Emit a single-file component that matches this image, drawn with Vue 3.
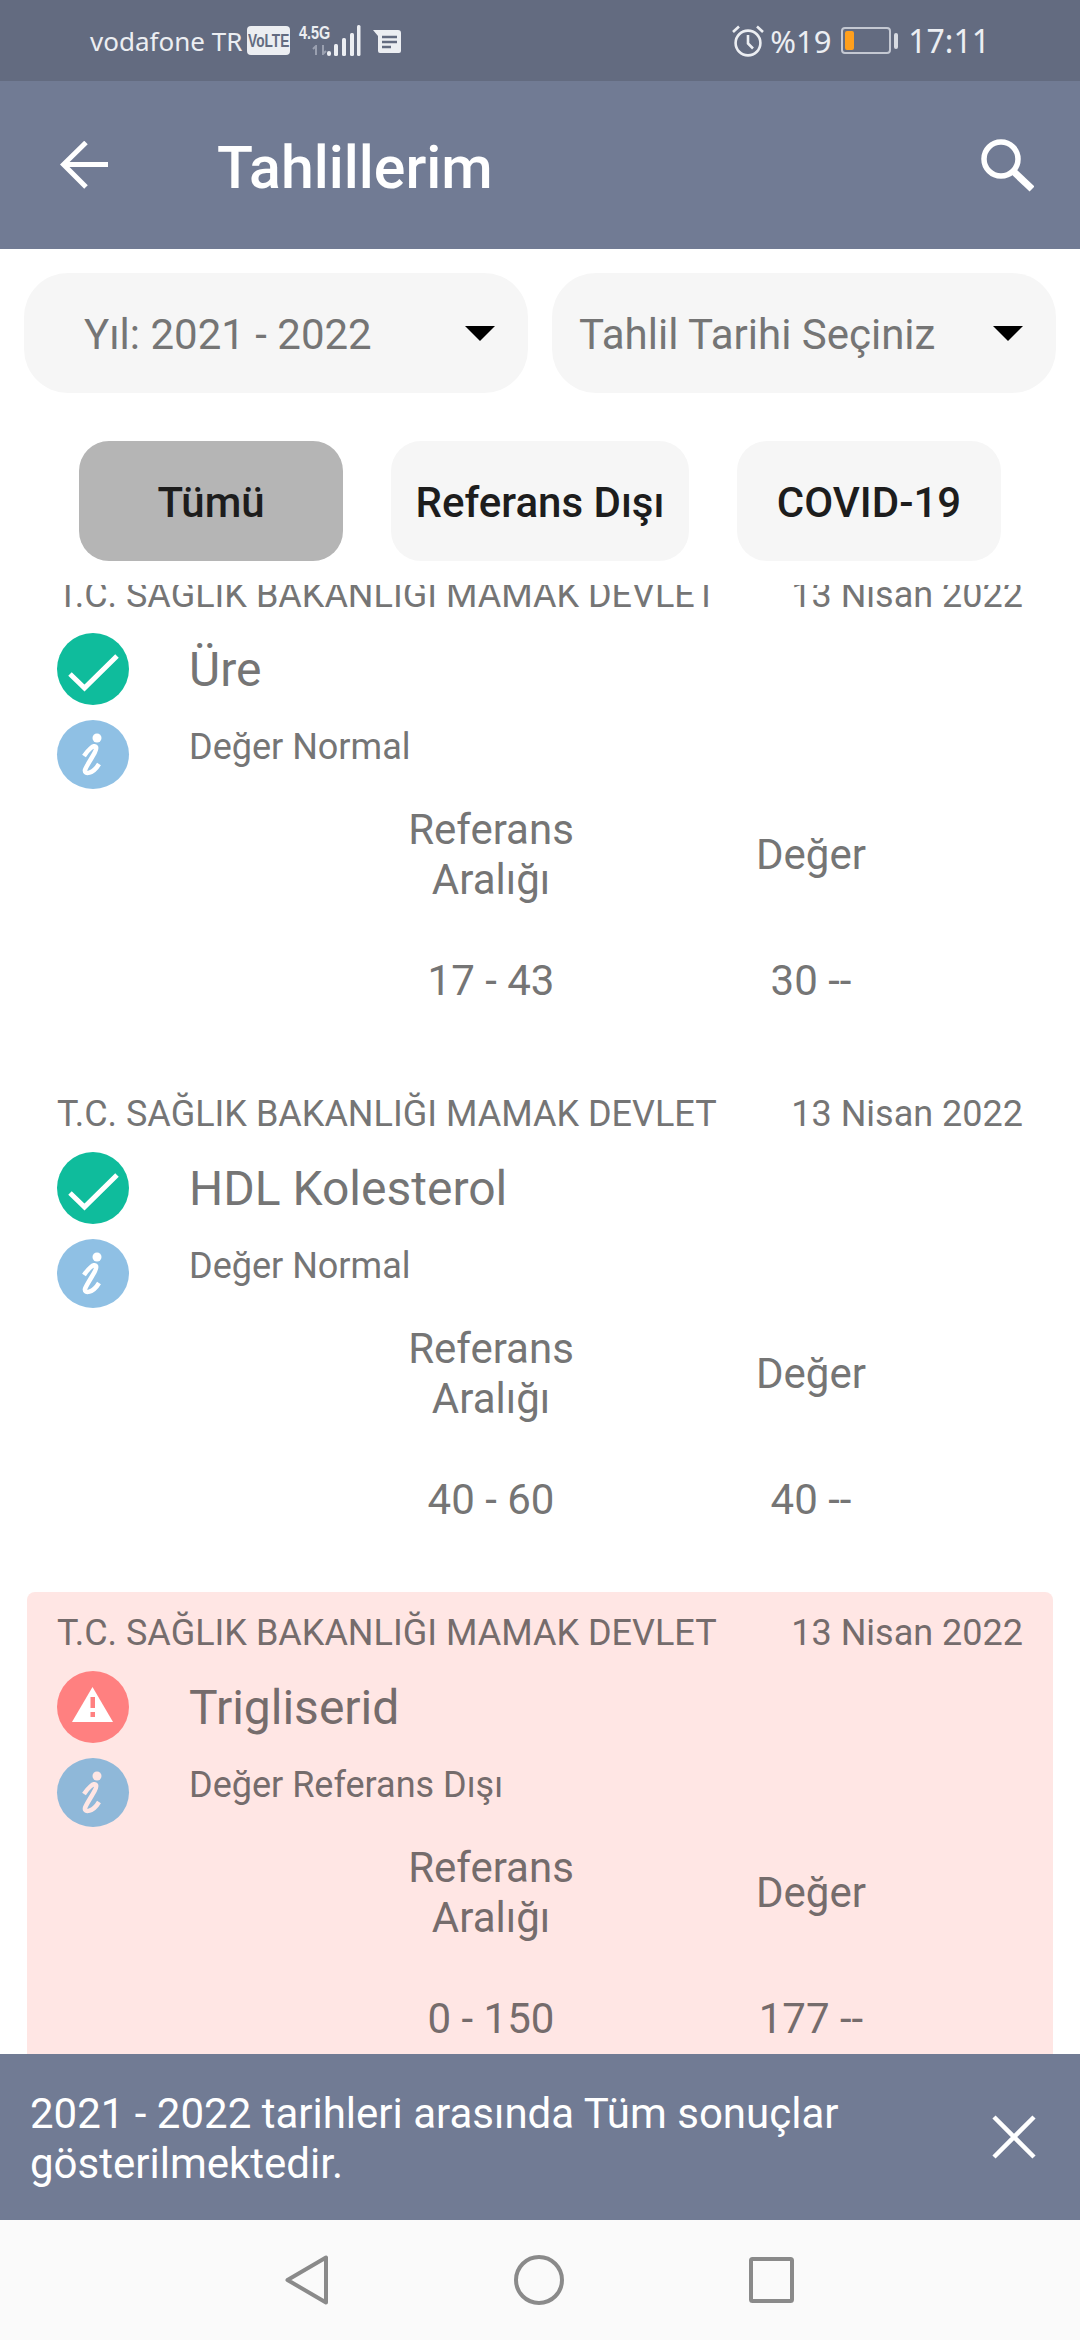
<template>
  <div class="screen">
    <div class="status-bar">
      <span class="carrier">vodafone TR</span>
      <span class="volte"><span class="volte-text">VoLTE</span></span>
      <span class="net">
        <span class="net-label">4.5G</span>
        <svg class="net-arrows" width="16" height="10" viewBox="0 0 16 10">
          <path d="M4 10V1L1 4M11 0v9l3-3" fill="none" stroke="#9aa0b0" stroke-width="2" />
        </svg>
      </span>
      <svg class="signal" width="34" height="31" viewBox="0 0 34 31">
        <rect x="0" y="26" width="4" height="5" rx="2" fill="#eceef2" />
        <rect x="7" y="19" width="4" height="12" rx="1.500" fill="#eceef2" />
        <rect x="15" y="13" width="4" height="18" rx="1.500" fill="#eceef2" />
        <rect x="23" y="8" width="4" height="23" rx="1.500" fill="#eceef2" />
        <rect x="30" y="0" width="3.500" height="31" rx="1.500" fill="#eceef2" />
      </svg>
      <svg class="notif" width="28" height="23" viewBox="0 0 28 23">
        <path d="M0 0h25a3 3 0 0 1 3 3v18a2 2 0 0 1-2 2H7a2 2 0 0 1-2-2V6z" fill="#eceef2" />
        <path d="M9 7h15M9 12h15M9 17h9" stroke="#636b80" stroke-width="2.600" />
      </svg>
      <span class="spacer"></span>
      <svg class="alarm" width="32" height="32" viewBox="0 0 32 32" fill="none" stroke="#eceef2" stroke-width="2.600">
        <circle cx="16" cy="18" r="12.400" />
        <path d="M16 10v8.500l5 5M1 7l6-5.500M31 7l-6-5.500" />
      </svg>
      <span class="percent">%19</span>
      <div class="battery"><div class="battery-fill"></div></div>
      <div class="battery-nub"></div>
      <span class="clock">17:11</span>
    </div>

    <header class="app-bar">
      <svg class="back" width="48" height="48" viewBox="0 0 48 48" fill="none" stroke="#fff" stroke-width="5">
        <path d="M48 23.500H4M26 1.500L3.500 23.500 26 46" />
      </svg>
      <h1 class="title">Tahlillerim</h1>
      <svg class="search" width="54" height="54" viewBox="0 0 54 54" fill="none" stroke="#fff" stroke-width="5.500">
        <circle cx="21" cy="21" r="17" />
        <path d="M33 33l19 18" stroke-width="7" />
      </svg>
    </header>

    <div class="filters">
      <div class="select first">
        <span>Yıl: 2021 - 2022</span>
        <i class="caret"></i>
      </div>
      <div class="select second">
        <span>Tahlil Tarihi Seçiniz</span>
        <i class="caret"></i>
      </div>
    </div>

    <div class="tabs">
      <button v-for="tab in tabs" :key="tab.label" class="tab" :class="[tab.cls, { active: tab.active }]">{{ tab.label }}</button>
    </div>

    <div class="results">
      <div class="results-inner">
        <div v-for="item in results" :key="item.name" class="result" :class="{ bad: item.bad }">
          <div class="result-head">
            <span>T.C. SAĞLIK BAKANLIĞI MAMAK DEVLET</span>
            <span>13 Nisan 2022</span>
          </div>
          <div class="result-row name-row">
            <span class="badge" :class="item.bad ? 'badge-bad' : 'badge-ok'">
              <svg v-if="!item.bad" width="72" height="72" viewBox="0 0 72 72" fill="none" stroke="#fff" stroke-width="5">
                <path d="M13 41l14.500 14L60 23" />
              </svg>
              <svg v-else width="72" height="72" viewBox="0 0 72 72">
                <path d="M35.500 16L56 51H15z" fill="#fff" />
                <rect x="33.500" y="26" width="4.500" height="11" fill="#ff8080" />
                <rect x="33.500" y="41" width="4.500" height="5" fill="#ff8080" />
              </svg>
            </span>
            <span class="name">{{ item.name }}</span>
          </div>
          <div class="result-row note-row">
            <span class="badge badge-info">
              <svg width="72" height="69" viewBox="0 0 72 69">
                <circle cx="40" cy="18" r="4.500" fill="currentColor" />
                <path d="M27 36C31 30 37 24 39 27 41 30 30 44 28 50 27 55 36 54 42 44" fill="none" stroke="currentColor" stroke-width="4.500" />
              </svg>
            </span>
            <span class="note">{{ item.note }}</span>
          </div>
          <div class="values">
            <div class="cell cell-ref">Referans<br />Aralığı</div>
            <div class="cell cell-head">Değer</div>
            <div class="cell cell-val">{{ item.range }}</div>
            <div class="cell cell-val">{{ item.value }}</div>
          </div>
        </div>
      </div>
    </div>

    <div class="snackbar">
      <p>2021 - 2022 tarihleri arasında Tüm sonuçlar gösterilmektedir.</p>
      <svg width="44" height="44" viewBox="0 0 44 44" stroke="#fff" stroke-width="4.500">
        <path d="M2 2l40 40M42 2L2 42" />
      </svg>
    </div>

    <nav class="nav-bar">
      <svg width="44" height="50" viewBox="0 0 44 50" fill="none" stroke="#8a8a8a" stroke-width="4" stroke-linejoin="round">
        <path d="M41 2.500V47.500L2.500 25z" />
      </svg>
      <svg width="50" height="50" viewBox="0 0 50 50" fill="none" stroke="#8a8a8a" stroke-width="4">
        <circle cx="25" cy="25" r="23" />
      </svg>
      <svg width="46" height="46" viewBox="0 0 46 46" fill="none" stroke="#8a8a8a" stroke-width="4" stroke-linejoin="round">
        <rect x="2" y="2" width="41" height="42" rx="1.500" />
      </svg>
    </nav>
  </div>
</template>

<script setup>
const tabs = [
  { label: 'Tümü', cls: 'tab-all', active: true },
  { label: 'Referans Dışı', cls: 'tab-out' },
  { label: 'COVID-19', cls: 'tab-covid' }
]

const results = [
  { name: 'Üre', note: 'Değer Normal', range: '17 - 43', value: '30 --' },
  { name: 'HDL Kolesterol', note: 'Değer Normal', range: '40 - 60', value: '40 --' },
  { name: 'Trigliserid', note: 'Değer Referans Dışı', range: '0 - 150', value: '177 --', bad: true }
]
</script>

<style>
html,
body {
  margin: 0;
  background: #fff;
}
</style>

<style scoped>
.screen {
  width: 1080px;
  height: 2340px;
  display: flex;
  flex-direction: column;
  overflow: hidden;
  background: #fff;
  font-family: Roboto, "Liberation Sans", sans-serif;
}

.status-bar {
  height: 81px;
  flex: none;
  display: flex;
  align-items: center;
  padding: 0 90px 0 90px;
  box-sizing: border-box;
  background: #636b80;
  color: #eceef2;
  font-family: "Noto Sans", sans-serif;
}

.carrier {
  font-size: 26px;
  width: 157px;
}

.volte {
  width: 43px;
  height: 29px;
  border-radius: 4px;
  background: #eceef2;
  color: #636b80;
  display: flex;
  justify-content: center;
  font-family: "Liberation Sans", sans-serif;
  font-size: 19px;
  font-weight: 700;
  line-height: 29px;
}

.volte-text {
  transform: scaleX(0.72);
}

.net {
  width: 30px;
  margin-left: 10px;
  height: 31px;
  display: flex;
  flex-direction: column;
  align-items: center;
}

.net-label {
  font-family: "Liberation Sans", sans-serif;
  font-size: 18px;
  font-weight: 700;
  line-height: 17px;
  transform: scaleX(0.8);
}

.net-arrows {
  margin-top: 3px;
  margin-left: 10px;
}

.signal {
  margin-left: -3px;
}

.notif {
  margin-left: 12px;
  margin-top: 2px;
}

.spacer {
  flex: 1;
}

.alarm {
  margin-right: 6px;
}

.percent {
  font-size: 31px;
  width: 71px;
}

.battery {
  width: 50px;
  height: 27px;
  box-sizing: border-box;
  border: 2px solid #c4c8d2;
  border-radius: 4px;
  padding: 2px;
}

.battery-fill {
  width: 9px;
  height: 100%;
  border-radius: 2px;
  background: #ff9f1c;
}

.battery-nub {
  width: 4px;
  height: 16px;
  margin-left: 3px;
  border-radius: 2px;
  background: #d8dbe2;
}

.clock {
  font-size: 32px;
  margin-left: 10px;
}

.app-bar {
  height: 168px;
  flex: none;
  display: flex;
  align-items: center;
  padding: 0 46px 0 60px;
  box-sizing: border-box;
  background: #717b94;
}

.title {
  flex: 1;
  margin: 5px 0 0 109px;
  color: #fff;
  font-size: 59px;
  font-weight: 500;
}

.filters {
  flex: none;
  display: flex;
  gap: 24px;
  padding: 24px 24px 0 24px;
}

.select {
  width: 504px;
  height: 120px;
  box-sizing: border-box;
  display: flex;
  align-items: center;
  justify-content: space-between;
  border-radius: 44px;
  background: #f6f6f6;
  color: #757575;
  font-size: 42px;
}

.select span {
  margin-top: 2px;
}

.first {
  padding: 0 33px 0 60px;
}

.second {
  padding: 0 33px 0 27px;
}

.caret {
  width: 0;
  height: 0;
  border-left: 15px solid transparent;
  border-right: 15px solid transparent;
  border-top: 15px solid #000;
}

.tabs {
  flex: none;
  display: flex;
  gap: 48px;
  padding: 48px 0 0 79px;
}

.tab {
  height: 120px;
  border: none;
  border-radius: 30px;
  background: #f6f6f6;
  color: #1d1d1d;
  font-family: inherit;
  font-size: 42px;
  font-weight: 500;
  padding: 2px 0 0;
}

.tab-all {
  width: 264px;
}

.tab-out {
  width: 298px;
}

.tab-covid {
  width: 264px;
}

.tab.active {
  background: #b5b5b5;
}

.results {
  flex: 1;
  min-height: 0;
  margin-top: 24px;
  overflow: hidden;
}

/* list is scrolled a bit, first row is cut by the tabs */
.results-inner {
  margin-top: -31px;
  padding: 0 27px;
  display: flex;
  flex-direction: column;
  gap: 24px;
}

.result {
  height: 495px;
  flex: none;
  padding: 0 30px;
  border-radius: 8px;
  color: #757575;
}

.result.bad {
  background: #ffe6e4;
  color: #756c6c;
}

.result-head {
  height: 79px;
  padding-top: 21px;
  box-sizing: border-box;
  display: flex;
  justify-content: space-between;
  font-size: 36px;
  line-height: 40px;
}

.result-row {
  display: flex;
  align-items: center;
}

.name-row {
  height: 72px;
}

.note-row {
  height: 69px;
  margin-top: 15px;
}

.badge {
  width: 72px;
  height: 100%;
  flex: none;
  border-radius: 50%;
  display: flex;
  align-items: center;
  justify-content: center;
  overflow: hidden;
}

.badge-ok {
  background: #0fbc9c;
}

.badge-bad {
  background: #ff8080;
}

.badge-info {
  background: #8fc0e4;
  color: #fff;
}

.bad .badge-info {
  background: #8fb8d9;
  color: #ffe6e4;
}

.name {
  margin-left: 60px;
  font-size: 48px;
}

.note {
  margin: 0 0 16px 60px;
  font-size: 36px;
}

.values {
  display: grid;
  grid-template-columns: 320px 320px;
  margin: 16px 0 0 274px;
  font-size: 42px;
  line-height: 50px;
  text-align: center;
}

.cell {
  display: flex;
  align-items: center;
  justify-content: center;
}

.cell-ref,
.cell-head {
  height: 100px;
}

.cell-val {
  margin-top: 51px;
  height: 50px;
}

.snackbar {
  height: 166px;
  flex: none;
  display: flex;
  align-items: center;
  justify-content: space-between;
  padding: 0 44px 0 30px;
  box-sizing: border-box;
  background: #717b94;
  color: #fff;
  font-size: 42px;
  line-height: 50px;
}

.snackbar p {
  width: 900px;
  margin: 4px 0 0;
}

.nav-bar {
  height: 120px;
  flex: none;
  display: flex;
  align-items: center;
  justify-content: center;
  gap: 185px;
  background: #fafafa;
}
</style>
